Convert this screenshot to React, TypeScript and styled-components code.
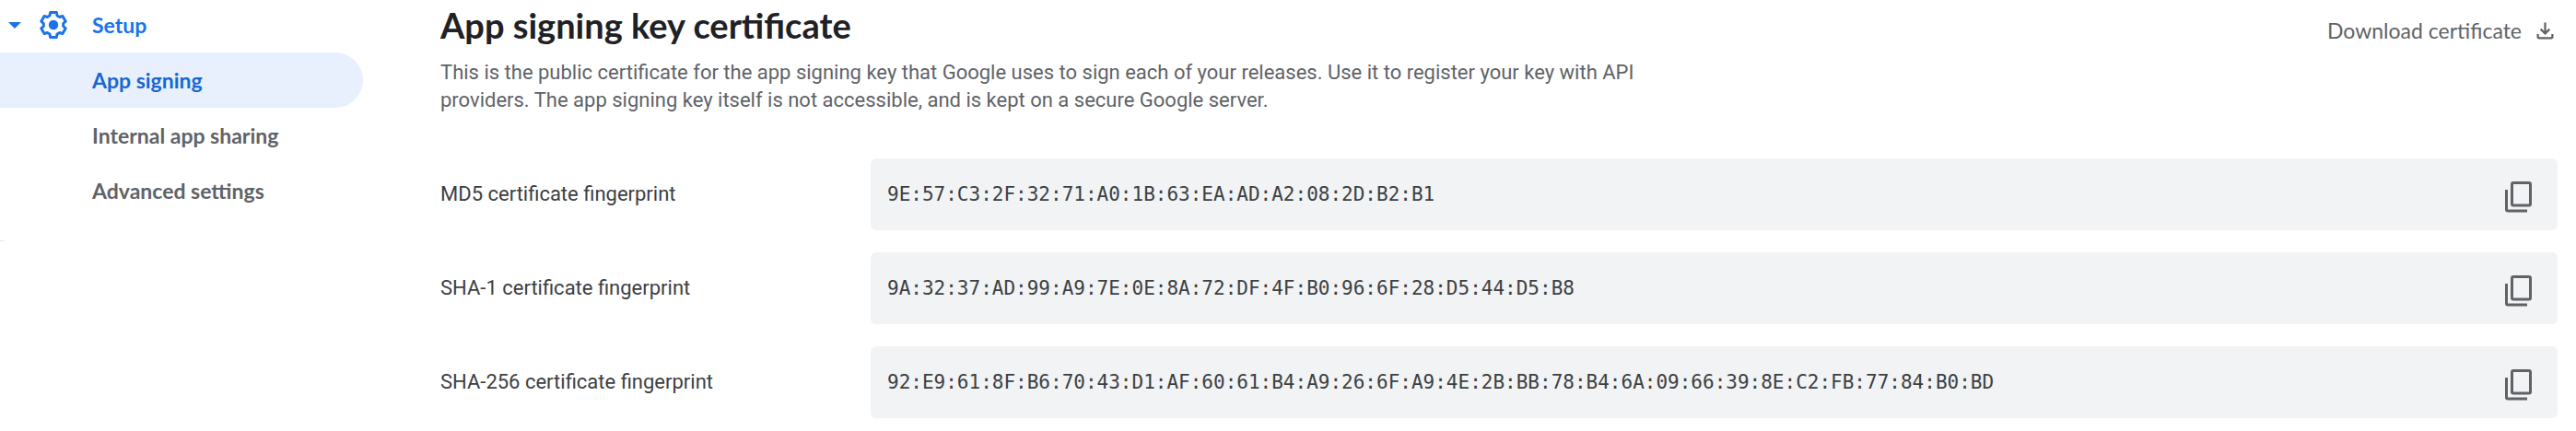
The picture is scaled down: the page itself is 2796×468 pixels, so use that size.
import React from 'react';
import styled, { createGlobalStyle } from 'styled-components';

const GlobalStyle = createGlobalStyle`
  *, *::before, *::after { box-sizing: border-box; }
  body {
    margin: 0;
    background: #fff;
    font-family: Roboto, "Liberation Sans", sans-serif;
    font-size: 22px;
    line-height: 30px;
    color: #3c4043;
  }
`;

const Page = styled.div`
  display: grid;
  grid-template-columns: 394px minmax(0, 1fr);
  column-gap: 84px;
  padding-right: 20px;
`;

const Sidebar = styled.nav`
  font-family: Lato, "Open Sans", sans-serif;
  font-size: 23px;
  font-weight: 700;
`;

const SectionToggle = styled.button`
  display: flex;
  align-items: center;
  width: 100%;
  height: 57px;
  padding: 0 0 3px 9px;
  border: 0;
  background: none;
  font: inherit;
  color: #1a73e8;
  cursor: pointer;
`;

const Caret = styled.svg`
  width: 14px;
  height: 7px;
  margin-right: 17px;
`;

const Gear = styled.svg`
  width: 36px;
  height: 36px;
  margin-right: 24px;
`;

const NavList = styled.ul`
  margin: 0;
  padding: 0;
  list-style: none;
`;

const NavLink = styled.a<{ $active?: boolean }>`
  display: flex;
  align-items: center;
  height: 60px;
  padding-left: 100px;
  border-radius: 0 30px 30px 0;
  text-decoration: none;
  background: ${(p) => (p.$active ? '#e8f0fe' : 'transparent')};
  color: ${(p) => (p.$active ? '#1967d2' : '#5f6368')};
`;

const NavEnd = styled.hr`
  width: 5px;
  height: 1px;
  margin: 24px 0 0;
  border: 0;
  background: #e8eaed;
`;

const Content = styled.main`
  padding: 3px 0 14px;
`;

const Header = styled.header`
  display: flex;
  justify-content: space-between;
  align-items: flex-end;
  margin-bottom: 13px;
`;

const Title = styled.h2`
  margin: 0;
  font-family: Lato, "Open Sans", sans-serif;
  font-size: 38px;
  font-weight: 700;
  line-height: 48px;
  color: #202124;
`;

const DownloadLink = styled.a`
  display: flex;
  align-items: center;
  gap: 12px;
  height: 36px;
  font-family: Lato, "Open Sans", sans-serif;
  font-size: 23px;
  color: #5f6368;
  text-decoration: none;

  svg {
    width: 27px;
    height: 27px;
  }
`;

const Description = styled.p`
  max-width: 1320px;
  margin: 0 0 48px;
  color: #5f6368;
`;

const Fingerprints = styled.dl`
  display: grid;
  gap: 24px;
  margin: 0;
`;

const Row = styled.div`
  display: grid;
  grid-template-columns: 467px minmax(0, 1fr);
  align-items: center;
`;

const Term = styled.dt``;

const ValueBox = styled.dd`
  display: flex;
  align-items: center;
  justify-content: space-between;
  min-height: 78px;
  margin: 0;
  padding: 0 19px 0 18px;
  border-radius: 6px;
  background: #f1f3f4;
`;

const Code = styled.code`
  min-width: 0;
  overflow-wrap: anywhere;
  font-family: "DejaVu Sans Mono", "Liberation Mono", monospace;
  font-size: 21px;
`;

const CopyButton = styled.button`
  flex: none;
  width: 48px;
  height: 48px;
  padding: 0;
  border: 0;
  background: none;
  color: #5f6368;
  cursor: pointer;

  svg {
    display: block;
  }
`;

// Six teeth, each drawn from base to tip and back to base.
const gearPoints = [0, 60, 120, 180, 240, 300]
  .flatMap((tooth) =>
    [[10.8, -22], [13.8, -14], [13.8, 14], [10.8, 22]].map(([r, offset]) => {
      const a = ((tooth + offset) * Math.PI) / 180;
      return `${(18 + r * Math.sin(a)).toFixed(2)},${(18 - r * Math.cos(a)).toFixed(2)}`;
    }),
  )
  .join(' ');

const GearIcon = () => (
  <Gear viewBox="0 0 36 36" aria-hidden="true">
    <polygon points={gearPoints} fill="none" stroke="currentColor" strokeWidth="3" strokeLinejoin="round" />
    <circle cx="18" cy="18" r="5.2" fill="currentColor" />
  </Gear>
);

const DownloadIcon = () => (
  <svg viewBox="0 0 24 24" fill="currentColor" aria-hidden="true">
    <path d="M12 16l-5-5 1.4-1.45 2.6 2.6V4h2v8.15l2.6-2.6L17 11l-5 5zm-6 4q-.825 0-1.412-.587T4 18v-3h2v3h12v-3h2v3q0 .825-.587 1.413T18 20H6z" />
  </svg>
);

const CopyIcon = () => (
  <svg width="48" height="48" viewBox="0 0 48 48" fill="none" stroke="currentColor" strokeWidth="3" aria-hidden="true">
    <rect x="17.5" y="11.5" width="20" height="24.5" rx="1.5" />
    <path d="M11.5 19V40.5Q11.5 42 13 42H34" />
  </svg>
);

const navItems = [
  { label: 'App signing', active: true },
  { label: 'Internal app sharing', active: false },
  { label: 'Advanced settings', active: false },
];

const fingerprints = [
  { name: 'MD5', value: '9E:57:C3:2F:32:71:A0:1B:63:EA:AD:A2:08:2D:B2:B1' },
  { name: 'SHA-1', value: '9A:32:37:AD:99:A9:7E:0E:8A:72:DF:4F:B0:96:6F:28:D5:44:D5:B8' },
  {
    name: 'SHA-256',
    value:
      '92:E9:61:8F:B6:70:43:D1:AF:60:61:B4:A9:26:6F:A9:4E:2B:BB:78:B4:6A:09:66:39:8E:C2:FB:77:84:B0:BD',
  },
];

export default function App() {
  return (
    <>
      <GlobalStyle />
      <Page>
        <Sidebar>
          <SectionToggle type="button" aria-expanded="true">
            <Caret viewBox="0 0 14 7" aria-hidden="true">
              <path d="M0 0h14L7 7z" fill="currentColor" />
            </Caret>
            <GearIcon />
            Setup
          </SectionToggle>
          <NavList>
            {navItems.map((item) => (
              <li key={item.label}>
                <NavLink href="#" $active={item.active} aria-current={item.active ? 'page' : undefined}>
                  {item.label}
                </NavLink>
              </li>
            ))}
          </NavList>
          <NavEnd />
        </Sidebar>
        <Content>
          <Header>
            <Title>App signing key certificate</Title>
            <DownloadLink href="#">
              Download certificate
              <DownloadIcon />
            </DownloadLink>
          </Header>
          <Description>
            This is the public certificate for the app signing key that Google uses to sign each of your releases. Use
            it to register your key with API providers. The app signing key itself is not accessible, and is kept on a
            secure Google server.
          </Description>
          <Fingerprints>
            {fingerprints.map((f) => (
              <Row key={f.name}>
                <Term>{f.name} certificate fingerprint</Term>
                <ValueBox>
                  <Code>{f.value}</Code>
                  <CopyButton type="button" aria-label={`Copy ${f.name} certificate fingerprint`}>
                    <CopyIcon />
                  </CopyButton>
                </ValueBox>
              </Row>
            ))}
          </Fingerprints>
        </Content>
      </Page>
    </>
  );
}
